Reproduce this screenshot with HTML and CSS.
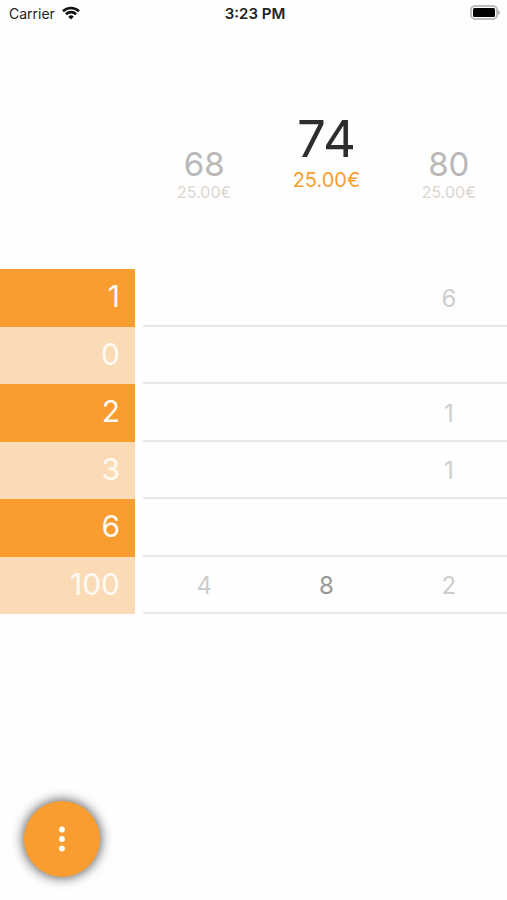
FILE: index.html
```html
<!DOCTYPE html>
<html lang="en">
<head>
<meta charset="utf-8">
<meta name="viewport" content="width=device-width, initial-scale=1">
<title>Sizes</title>
<link rel="stylesheet" href="styles.css">
</head>
<body>
<header class="status">
  <div class="carrier">
    <span>Carrier</span>
    <svg class="wifi" viewBox="0 0 18 14" aria-hidden="true">
      <path d="M1 5.2a11.5 11.5 0 0 1 16 0" />
      <path d="M3.9 8.2a7.4 7.4 0 0 1 10.2 0" />
      <path class="dot" d="M9 13.6 6.2 10.7a4 4 0 0 1 5.6 0z" />
    </svg>
  </div>
  <time class="clock">3:23 PM</time>
  <svg class="battery" viewBox="0 0 31 16" aria-hidden="true">
    <rect class="shell" x="1" y="1" width="26" height="13" rx="4" />
    <rect x="3" y="3" width="22" height="9" rx="1.500" />
    <path class="tip" d="M28 5q4 2.500 0 5z" />
  </svg>
</header>
<main class="content">
  <table class="stock">
    <colgroup><col class="label-col"><col><col><col></colgroup>
    <thead>
      <tr>
        <td></td>
        <th scope="col"><span class="size">68</span><span class="price">25.00€</span></th>
        <th scope="col" class="current"><span class="size">74</span><span class="price">25.00€</span></th>
        <th scope="col"><span class="size">80</span><span class="price">25.00€</span></th>
      </tr>
    </thead>
    <tbody>
      <tr><th scope="row">1</th><td></td><td></td><td>6</td></tr>
      <tr><th scope="row">0</th><td></td><td></td><td></td></tr>
      <tr><th scope="row">2</th><td></td><td></td><td>1</td></tr>
      <tr><th scope="row">3</th><td></td><td></td><td>1</td></tr>
      <tr><th scope="row">6</th><td></td><td></td><td></td></tr>
      <tr><th scope="row">100</th><td>4</td><td class="current">8</td><td>2</td></tr>
    </tbody>
  </table>
</main>
<button class="menu" type="button" aria-label="More options">
  <svg viewBox="0 0 8 26" aria-hidden="true">
    <circle cx="4" cy="3.500" r="2.900" />
    <circle cx="4" cy="13" r="2.900" />
    <circle cx="4" cy="22.500" r="2.900" />
  </svg>
</button>
</body>
</html>
```
FILE: styles.css
```css
* {
  box-sizing: border-box;
}

body {
  margin: 0;
  min-height: 100vh;
  background: #fefefe;
  color: #2d2d2d;
  font-family: Inter, "Liberation Sans", sans-serif;
}

.status {
  display: grid;
  grid-template-columns: 1fr auto 1fr;
  align-items: center;
  height: 26px;
  padding: 0 6px 0 9px;
  color: #222;
  font-size: 14px;
}

.carrier {
  display: flex;
  align-items: center;
  gap: 7px;
}

.wifi {
  width: 18px;
  height: 14px;
  fill: none;
  stroke: #111;
  stroke-width: 2.6;
}

.wifi .dot {
  fill: #111;
  stroke: none;
}

.clock {
  font-size: 15px;
  font-weight: 600;
}

.battery {
  justify-self: end;
  width: 31px;
  height: 16px;
}

.battery .shell {
  fill: #fff;
  stroke: #bdbdbd;
  stroke-width: 2;
}

.battery .tip {
  fill: #b5b5b5;
}

.content {
  overflow: hidden;
  padding-top: 82px;
}

/* The last column runs slightly past the window edge. */
.stock {
  width: calc(100% + 3px);
  table-layout: fixed;
  border-collapse: separate;
  border-spacing: 0;
}

.label-col {
  width: 143px;
}

.stock th,
.stock td {
  padding: 0;
  font-weight: 400;
  text-align: center;
}

.stock thead tr {
  height: 161px;
}

.stock thead th {
  vertical-align: top;
  padding-top: 36px;
}

.stock thead th.current {
  padding-top: 0;
}

.size,
.price {
  display: block;
}

.size {
  color: #b8b8b8;
  font-size: 33px;
  line-height: 40px;
}

.price {
  color: #dcd6cf;
  font-size: 16px;
  line-height: 16px;
}

thead .current .size {
  color: #2d2d2d;
  font-size: 51px;
  line-height: 62px;
}

thead .current .price {
  color: #f99d30;
  font-size: 20px;
  line-height: 20px;
}

.stock tbody tr {
  height: 57px;
}

.stock tbody tr:nth-child(odd) {
  height: 58px;
}

.stock tbody th {
  padding: 0 15px 4px 0;
  border-right: 8px solid #fefefe;
  background: #fbdbb5;
  color: #fffaf2;
  font-size: 30px;
  line-height: 36px;
  text-align: right;
}

.stock tbody tr:nth-child(odd) th {
  background: #f99d30;
}

.stock tbody td {
  padding-top: 3px;
  border-bottom: 2px solid #e8e8e8;
  color: #cdcdcd;
  font-size: 24px;
  line-height: 28px;
}

.stock tbody td.current {
  color: #989898;
}

.menu {
  position: fixed;
  left: 24px;
  bottom: 23px;
  display: grid;
  place-items: center;
  width: 76px;
  height: 76px;
  padding: 0;
  border: 0;
  border-radius: 50%;
  background: #f99d30;
  box-shadow: 0 0 12px 1px rgba(0, 0, 0, 0.65);
}

.menu svg {
  width: 8px;
  height: 26px;
  fill: #fff;
}
```
